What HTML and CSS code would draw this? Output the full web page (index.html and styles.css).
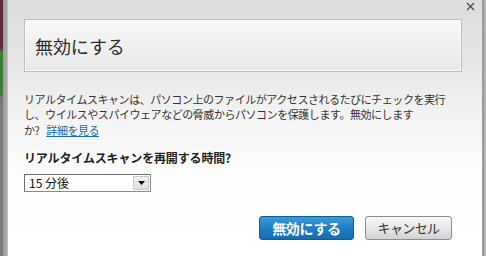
FILE: index.html
```html
<!DOCTYPE html>
<html lang="ja">
<head>
<meta charset="utf-8">
<link rel="stylesheet" href="styles.css">
</head>
<body>
<div class="frame">
  <div class="left-edge"><div class="outer"></div><div class="border"></div></div>
  <div class="dialog">
    <svg class="close" width="9" height="9" viewBox="0 0 9 9"><path d="M1 1L8 8M8 1L1 8" stroke="#444" stroke-width="1.1" fill="none"/></svg>
    <div class="header"><h1 class="title">無効にする</h1></div>
    <p class="desc">リアルタイムスキャンは、パソコン上のファイルがアクセスされるたびにチェックを実行<br>し、ウイルスやスパイウェアなどの脅威からパソコンを保護します。無効にします<br>か? <a class="link" href="#">詳細を見る</a></p>
    <div class="question">リアルタイムスキャンを再開する時間?</div>
    <div class="select">
      <span class="select-value">15 分後</span>
      <span class="select-btn"><svg width="7" height="4" viewBox="0 0 7 4"><path d="M0 0H7L3.5 4Z" fill="#000"/></svg></span>
    </div>
    <div class="actions">
      <button class="btn btn-primary">無効にする</button>
      <button class="btn btn-secondary">キャンセル</button>
    </div>
  </div>
  <div class="right-edge"></div>
</div>
</body>
</html>
```
FILE: styles.css
```css
* { box-sizing: border-box; }
html, body { margin: 0; padding: 0; }
body {
  width: 486px;
  height: 256px;
  overflow: hidden;
  font-family: "Noto Sans CJK JP", "Noto Sans", sans-serif;
  color: #333;
}
.frame {
  display: flex;
  height: 256px;
}
.left-edge {
  width: 8px;
  display: flex;
}
.left-edge .outer {
  width: 3px;
  background: linear-gradient(to bottom, #5e2a3a 0, #5e2a3a 48px, #3f7d3a 52px, #3f7d3a 94px, #7a7a7a 98px, #7a7a7a 100%);
}
.left-edge .border {
  width: 5px;
  background: linear-gradient(to right, #9c9c9c 0, #a8a8a8 3px, #c4c4c4 5px);
}
.right-edge {
  width: 4px;
  background: linear-gradient(to right, #b0b0b0 0, #8c8c8c 1px, #a6a6a6 2px, #c8c8c8 4px);
}
.dialog {
  flex: 1;
  position: relative;
  padding: 19px 20px 0 16px;
  background: linear-gradient(to bottom, #dcdcdc 0, #e6e6e6 60px, #f4f4f4 120px, #fdfdfd 170px, #ffffff 100%);
}
.close {
  position: absolute;
  top: 2px;
  right: 7px;
}
.header {
  height: 53px;
  border: 1px solid #bdbdbd;
  box-shadow: inset 0 0 0 1px #fafafa;
  background: linear-gradient(to bottom, #f7f7f7, #e9e9e9);
  display: flex;
  align-items: center;
  padding-left: 10px;
}
.title {
  margin: 0;
  font-size: 18px;
  font-weight: normal;
  color: #2a2a2a;
  letter-spacing: -0.1px;
  line-height: 20px;
}
.desc {
  margin: 20px 0 0 0;
  font-size: 11px;
  line-height: 15.3px;
  letter-spacing: -0.45px;
  color: #333;
  white-space: nowrap;
}
.link {
  color: #1a6ea8;
  text-decoration: underline;
  margin-left: 5px;
}
.question {
  margin-top: 12px;
  font-size: 12px;
  line-height: 16px;
  font-weight: bold;
  color: #222;
  letter-spacing: -0.15px;
}
.select {
  margin-top: 8px;
  width: 127px;
  height: 18px;
  display: flex;
  align-items: center;
  justify-content: space-between;
  background: #fff;
  border: 1px solid #8a8a8a;
  border-top-color: #6f6f6f;
  border-left-color: #6f6f6f;
  padding: 0 1px 0 4px;
}
.select-value {
  font-size: 12px;
  color: #111;
  line-height: 14px;
}
.select-btn {
  width: 16px;
  height: 14px;
  background: linear-gradient(to bottom, #f4f4f4, #dedede);
  border: 1px solid #c8c8c8;
  display: flex;
  align-items: center;
  justify-content: center;
}
.actions {
  margin-top: 24px;
  margin-right: 10px;
  display: flex;
  justify-content: flex-end;
  gap: 11px;
}
.btn {
  height: 24px;
  padding: 0;
  border-radius: 3px;
  font-family: "Noto Sans CJK JP", "Noto Sans", sans-serif;
  line-height: 20px;
  cursor: pointer;
}
.btn-primary {
  width: 95px;
  font-size: 14px;
  font-weight: bold;
  color: #fff;
  background: linear-gradient(to bottom, #3b9ad8 0, #1f7fc2 50%, #146db0 100%);
  border: 1px solid #0f5c96;
  letter-spacing: -0.3px;
}
.btn-secondary {
  width: 87px;
  font-size: 13px;
  color: #333;
  background: linear-gradient(to bottom, #f7f7f7 0, #e6e6e6 55%, #d2d2d2 100%);
  border: 1px solid #8e8e8e;
  letter-spacing: -0.6px;
}
```
